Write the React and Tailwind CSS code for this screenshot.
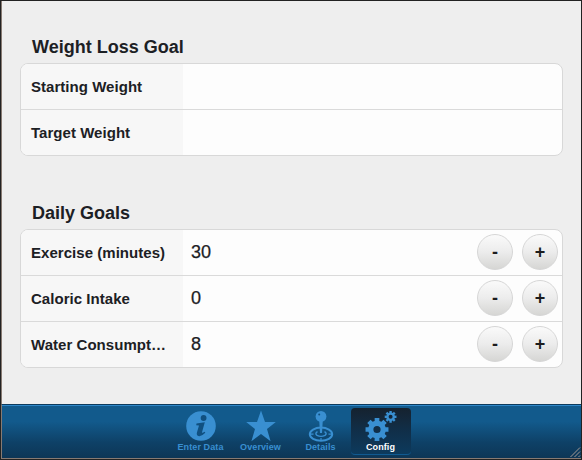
const gearPath = (cx, cy, inner, outer, teeth) => {
  const step = (Math.PI * 2) / teeth;
  const points = [];
  for (let i = 0; i < teeth; i++) {
    const a = i * step - Math.PI / 2;
    [[-0.34, inner], [-0.26, outer], [0.26, outer], [0.34, inner]].forEach(([o, r]) => {
      points.push(`${(cx + r * Math.cos(a + o * step)).toFixed(2)} ${(cy + r * Math.sin(a + o * step)).toFixed(2)}`);
    });
  }
  return `M${points.join("L")}Z`;
};

const ring = (cx, cy, r) => `M${cx - r} ${cy}a${r} ${r} 0 1 0 ${2 * r} 0a${r} ${r} 0 1 0 ${-2 * r} 0Z`;

const InfoIcon = () => (
  <svg width="60" height="36" viewBox="0 0 60 36" fill="#398fd1">
    <circle cx="30" cy="18" r="14.8" />
    <g fill="#105080">
      <circle cx="32.6" cy="10" r="2.9" />
      <path d="M25.5 15.6L33.8 14.2L31 24.3Q30.8 25.6 33.7 23.7L34.3 24.8Q30.5 28.8 27.3 28Q25.2 27.2 26 24.3L28 17.5L25.2 17.2Z" />
    </g>
  </svg>
);

const StarIcon = () => (
  <svg width="60" height="36" viewBox="0 0 60 36" fill="#398fd1">
    <path d="M30 2.6L34 14H44.8L36 21L39.6 33.2L30 26L20.4 33.2L24 21L15.2 14H26Z" />
  </svg>
);

const JoystickIcon = () => (
  <svg width="60" height="36" viewBox="1 0 60 36" fill="none" stroke="#398fd1">
    <circle cx="31" cy="8.4" r="5.4" fill="#398fd1" stroke="none" />
    <path d="M29.2 12H32.8L32 25H30Z" fill="#398fd1" stroke="none" />
    <ellipse cx="31" cy="26.2" rx="11.2" ry="6.6" strokeWidth="2" />
    <path d="M27.5 23.7Q24.5 25.4 27 27.4Q31 29.4 35 27.4Q37.5 25.4 34.5 23.7" strokeWidth="1.4" />
    <path d="M31 30V32.4M20 26.2H23.5M38.5 26.2H42" strokeWidth="1.2" />
    <circle cx="29.2" cy="6.6" r="1" fill="#105080" stroke="none" />
  </svg>
);

const GearsIcon = () => (
  <svg width="60" height="36" viewBox="0 0 60 36" fill="#398fd1" fillRule="evenodd">
    <path d={gearPath(26, 21.5, 8.9, 11.7, 8) + ring(26, 21.5, 3.6)} />
    <path d={gearPath(39.6, 8.8, 4.4, 6, 8) + ring(39.6, 8.8, 2)} />
  </svg>
);

const Stepper = ({ children }) => (
  <button className="size-9 rounded-full border border-[#d6d6d6] bg-linear-to-b from-[#fafafa] via-[#ececec] to-[#d6d6d4] text-[18px] leading-[34px] font-bold text-[#1c1c1e]">
    {children}
  </button>
);

const Field = ({ label, value }) => (
  <div className="flex h-[46px] border-b border-[#dadada] last:h-[45px] last:border-b-0">
    <div className="w-[162px] shrink-0 truncate bg-[#f7f7f7] pr-3 pl-[10px] text-[15px] leading-[46px] font-bold tracking-[0.04px]">
      {label}
    </div>
    {value && (
      <div className="flex flex-1 items-start pt-1 pr-1 pl-2">
        <span className="flex-1 text-[18px] leading-9 [-webkit-text-stroke:0.25px_#1c2024]">{value}</span>
        <div className="flex gap-[9px]">
          <Stepper>-</Stepper>
          <Stepper>+</Stepper>
        </div>
      </div>
    )}
  </div>
);

const FieldSet = ({ title, fields }) => (
  <section>
    <h2 className="mb-1 pl-3 text-[18px] leading-6 font-bold">{title}</h2>
    <div className="overflow-hidden rounded-lg border border-[#d8d8d8] bg-[#fdfdfd]">
      {fields.map((f) => (
        <Field key={f.label} {...f} />
      ))}
    </div>
  </section>
);

const Tab = ({ label, icon, active }) => (
  <div
    className={
      active
        ? "flex h-[47px] w-[60px] flex-col items-center overflow-hidden rounded-[4px] border-b border-[#105a91] bg-linear-to-b from-[#15222f] via-[#102f49] to-[#0c3a5d] text-white"
        : "flex h-[47px] w-[60px] flex-col items-center text-[#398fd1]"
    }
  >
    <div className="h-[34px]">{icon}</div>
    <span className="text-[9px] leading-[11px] font-bold whitespace-nowrap tracking-[0.1px]">{label}</span>
  </div>
);

export default function App() {
  return (
    <div className="flex h-[460px] w-[582px] flex-col border border-[#222] bg-[#eee] font-['Liberation_Sans',Arial,sans-serif] text-[#1c2024]">
      <main className="flex flex-1 flex-col gap-[45px] border-l border-[#877a72] pt-[34px] pr-[18px] pl-[18px]">
        <FieldSet title="Weight Loss Goal" fields={[{ label: "Starting Weight" }, { label: "Target Weight" }]} />
        <FieldSet
          title="Daily Goals"
          fields={[
            { label: "Exercise (minutes)", value: "30" },
            { label: "Caloric Intake", value: "0" },
            { label: "Water Consumpt…", value: "8" },
          ]}
        />
      </main>
      <nav className="relative h-[55px] border-t border-b border-l border-t-[#0c3a5d] border-b-[#877a72] border-l-[#877a72]">
        <div className="flex h-full justify-center border-t border-[#2f87c8] bg-linear-to-b from-[#125a8c] from-30% via-[#0e4167] via-70% to-[#0d3656] pt-[2px] pr-[2px]">
          <Tab label="Enter Data" icon={<InfoIcon />} />
          <Tab label="Overview" icon={<StarIcon />} />
          <Tab label="Details" icon={<JoystickIcon />} />
          <Tab label="Config" icon={<GearsIcon />} active />
        </div>
        <svg className="absolute right-0 bottom-0" width="12" height="12" viewBox="0 0 12 12" stroke="#a49a94" fill="none">
          <path d="M1.5 11L11 1.5M5.5 11L11 5.5M9.5 11L11 9.5" />
        </svg>
      </nav>
    </div>
  );
}
